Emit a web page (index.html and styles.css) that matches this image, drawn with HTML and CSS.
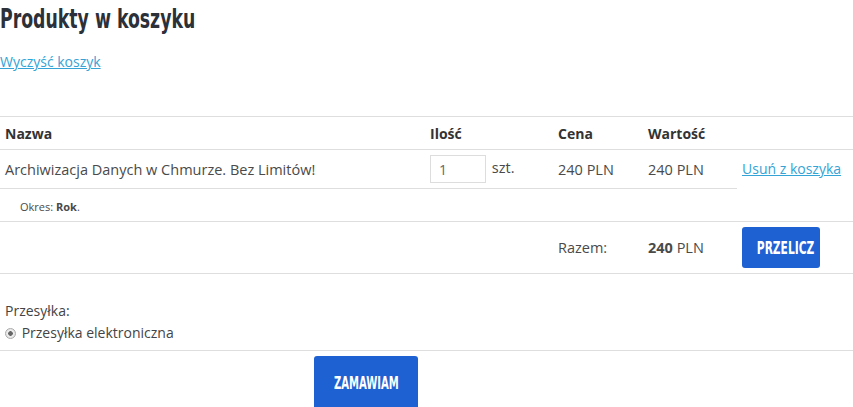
FILE: index.html
```html
<!DOCTYPE html>
<html>
<head><title>Koszyk</title>
<meta charset="utf-8"/>
<link rel="stylesheet" href="styles.css">
</head>
<body>
<h1 class="title"><span class="narrow">Produkty w koszyku</span></h1>
<div class="clear-cart"><a href="#">Wyczyść koszyk</a></div>

<table class="cart">
  <thead>
    <tr>
      <th class="col-name">Nazwa</th>
      <th class="col-qty">Ilość</th>
      <th class="col-price">Cena</th>
      <th class="col-value">Wartość</th>
      <th class="col-action"></th>
    </tr>
  </thead>
  <tbody>
    <tr class="product-row">
      <td>Archiwizacja Danych w Chmurze. Bez Limitów!</td>
      <td><input class="qty-input" type="text" value="1"> szt.</td>
      <td>240 PLN</td>
      <td>240 PLN</td>
      <td class="action-cell" rowspan="2"><a href="#">Usuń z koszyka</a></td>
    </tr>
    <tr class="option-row">
      <td colspan="4"><span class="option">Okres: <b>Rok</b>.</span></td>
    </tr>
    <tr class="sum-row">
      <td></td>
      <td></td>
      <td>Razem:</td>
      <td><b>240</b> PLN</td>
      <td><button class="btn"><span class="narrow">PRZELICZ</span></button></td>
    </tr>
  </tbody>
</table>

<div class="shipping">
  <div>Przesyłka:</div>
  <label class="radio-label"><input type="radio" name="shipping" checked> Przesyłka elektroniczna</label>
</div>

<div class="order-box">
  <button class="btn btn-order"><span class="narrow">ZAMAWIAM</span></button>
</div>
</body>
</html>
```

FILE: styles.css
```css
body {
    margin: 0;
    font-family: "Open Sans", sans-serif;
    font-size: 14px;
    color: #444;
}
a {
    color: #34a3d6;
}
.narrow {
    display: inline-block;
    white-space: nowrap;
}
.title {
    font-family: "DejaVu Sans", sans-serif;
    font-stretch: condensed;
    font-weight: bold;
    font-size: 26px;
    color: #2c3039;
    margin: 0;
    padding-top: 2px;
    line-height: 34px;
}
.title .narrow {
    transform: scaleX(0.74);
    transform-origin: left center;
}
.clear-cart {
    margin-top: 16px;
    line-height: 20px;
}
.cart {
    width: 100%;
    border-collapse: collapse;
    margin-top: 44px;
}
.cart th,
.cart td {
    text-align: left;
    padding: 0 5px;
    border-top: 1px solid #dedede;
    vertical-align: middle;
}
.cart td {
    font-size: 14.5px;
    color: #4a4a4a;
}
.cart th {
    height: 32px;
    font-weight: bold;
    color: #333;
}
.col-name { width: 415px; }
.col-qty { width: 118px; }
.col-price { width: 80px; }
.col-value { width: 84px; }
.product-row td {
    height: 38px;
}
.qty-input {
    width: 56px;
    height: 28px;
    box-sizing: border-box;
    border: 1px solid #ddd;
    padding: 0 8px;
    font-family: "Open Sans", sans-serif;
    font-size: 14px;
    color: #666;
    margin: 0 2px 0 0;
    vertical-align: middle;
}
.action-cell {
    vertical-align: top !important;
    padding-top: 9px !important;
    font-size: 14px !important;
}
.option-row td {
    height: 32px;
}
.option {
    font-size: 11px;
    padding-left: 15px;
}
.sum-row td {
    height: 51px;
    border-bottom: 1px solid #dedede;
}
.btn {
    font-family: "DejaVu Sans", sans-serif;
    font-stretch: condensed;
    font-weight: bold;
    font-size: 18px;
    color: #fff;
    background-color: #1e61d3;
    border: none;
    border-radius: 3px;
    width: 78px;
    height: 41px;
    padding: 0;
    text-align: center;
    overflow: visible;
}
.btn .narrow {
    transform: scaleX(0.66);
}
.shipping {
    padding: 26px 5px 6px;
    line-height: 22px;
}
.radio-label input {
    appearance: none;
    -webkit-appearance: none;
    box-sizing: border-box;
    margin: 0 2px 0 0;
    width: 11px;
    height: 11px;
    border: 1px solid #aaa;
    border-radius: 50%;
    background: radial-gradient(circle, #666 0, #666 2px, #eee 2.6px, #ddd 100%);
    vertical-align: -1px;
}
.order-box {
    border-top: 1px solid #dedede;
    padding: 5px 0 0 314px;
}
.btn-order {
    width: 104px;
    height: 52px;
    border-radius: 3px 3px 0 0;
}
.btn-order .narrow {
    transform: scaleX(0.62);
}
```
